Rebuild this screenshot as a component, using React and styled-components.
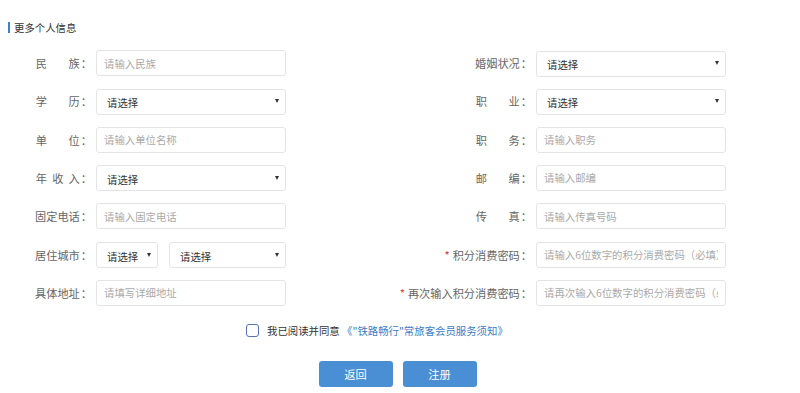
import React from "react"
import styled, { createGlobalStyle } from "styled-components"

const GlobalStyle = createGlobalStyle`
  body {
    margin: 0;
    background: #fff;
    font-family: "Noto Sans CJK SC", "Noto Sans", sans-serif;
    text-spacing-trim: space-all;
    font-feature-settings: "halt" 0, "chws" 0;
  }

  input, select, button {
    text-spacing-trim: space-all;
    font-feature-settings: "halt" 0, "chws" 0;
  }
`

const Page = styled.div`
  padding-top: 22px;
`

const SectionTitle = styled.h3`
  margin: 0 0 0 8px;
  padding-left: 4px;
  border-left: 2px solid #3c83c9;
  height: 11px;
  line-height: 11px;
  font-size: 10.4px;
  font-weight: normal;
  color: #333;
`

const FormGrid = styled.div`
  display: grid;
  grid-template-columns: 96px 190px 250px 190px;
  grid-auto-rows: 26px;
  row-gap: 12.33px;
  align-items: center;
  margin-top: 17px;
`

const Label = styled.label`
  display: flex;
  justify-content: flex-end;
  align-items: center;
  padding-right: 5px;
  font-size: 11.2px;
  color: #666;
  white-space: nowrap;
`

const Spread = styled.span`
  display: inline-block;
  width: 44px;
  text-align: justify;
  text-align-last: justify;
`

const Colon = styled.span`
  display: inline-block;
  width: 1em;
  padding-left: 1px;
  box-sizing: border-box;
`

const Required = styled.span`
  color: #e4393c;
  margin-right: 3px;
`

const Input = styled.input`
  box-sizing: border-box;
  width: 100%;
  height: 26px;
  padding: 0 7px;
  border: 1px solid #e4e4e4;
  border-radius: 3px;
  font-family: inherit;
  font-size: 10.4px;
  color: #333;
  outline: none;

  &::placeholder {
    color: #aaa;
  }
`

const SelectWrap = styled.div`
  position: relative;
  width: ${p => (p.$width ? `${p.$width}px` : "100%")};
  flex: ${p => (p.$width ? "none" : "1")};
  height: 26px;
`

const Select = styled.select`
  box-sizing: border-box;
  width: 100%;
  height: 26px;
  padding: 2px 18px 0 10px;
  border: 1px solid #e4e4e4;
  border-radius: 3px;
  background: #fff;
  appearance: none;
  font-family: inherit;
  font-size: 10.4px;
  color: #333;
  outline: none;
`

const Arrow = styled.span`
  position: absolute;
  right: 7px;
  top: 11px;
  border-left: 2.5px solid transparent;
  border-right: 2.5px solid transparent;
  border-top: 4px solid #333;
  pointer-events: none;
`

const CityRow = styled.div`
  display: flex;
  gap: 11px;
`

const Agreement = styled.div`
  display: flex;
  align-items: center;
  gap: 8px;
  margin-top: 17px;
  padding-left: 246px;
  font-size: 10.4px;
  color: #333;
`

const CheckBox = styled.span`
  box-sizing: border-box;
  width: 13px;
  height: 13px;
  border: 1px solid #5476a8;
  border-radius: 3px;
`

const Link = styled.a`
  color: #3b7cc9;
  text-decoration: none;
`

const Actions = styled.div`
  display: flex;
  justify-content: center;
  gap: 10px;
  margin-top: 23px;
  padding-right: 5px;
`

const Button = styled.button`
  width: 74px;
  height: 26px;
  border: none;
  border-radius: 3px;
  background: #4a8fd3;
  color: #fff;
  font-family: inherit;
  font-size: 11.2px;
`

const Dropdown = ({ width }) => (
  <SelectWrap $width={width}>
    <Select defaultValue="">
      <option value="">请选择</option>
    </Select>
    <Arrow />
  </SelectWrap>
)

const FieldLabel = ({ text, spread, required }) => (
  <Label>
    {required && <Required>*</Required>}
    {spread ? <Spread>{text}</Spread> : text}
    <Colon>：</Colon>
  </Label>
)

const App = () => {
  return (
    <Page>
      <GlobalStyle />
      <SectionTitle>更多个人信息</SectionTitle>
      <FormGrid>
        <FieldLabel text="民族" spread />
        <Input placeholder="请输入民族" />
        <FieldLabel text="婚姻状况" />
        <Dropdown />

        <FieldLabel text="学历" spread />
        <Dropdown />
        <FieldLabel text="职业" spread />
        <Dropdown />

        <FieldLabel text="单位" spread />
        <Input placeholder="请输入单位名称" />
        <FieldLabel text="职务" spread />
        <Input placeholder="请输入职务" />

        <FieldLabel text="年收入" spread />
        <Dropdown />
        <FieldLabel text="邮编" spread />
        <Input placeholder="请输入邮编" />

        <FieldLabel text="固定电话" />
        <Input placeholder="请输入固定电话" />
        <FieldLabel text="传真" spread />
        <Input placeholder="请输入传真号码" />

        <FieldLabel text="居住城市" />
        <CityRow>
          <Dropdown width={62} />
          <Dropdown />
        </CityRow>
        <FieldLabel text="积分消费密码" required />
        <Input type="text" placeholder="请输入6位数字的积分消费密码（必填）" />

        <FieldLabel text="具体地址" />
        <Input placeholder="请填写详细地址" />
        <FieldLabel text="再次输入积分消费密码" required />
        <Input type="text" placeholder="请再次输入6位数字的积分消费密码（必填）" />
      </FormGrid>

      <Agreement>
        <CheckBox />
        <span>
          我已阅读并同意 <Link href="#">《"铁路畅行"常旅客会员服务须知》</Link>
        </span>
      </Agreement>

      <Actions>
        <Button>返回</Button>
        <Button>注册</Button>
      </Actions>
    </Page>
  )
}

export default App
